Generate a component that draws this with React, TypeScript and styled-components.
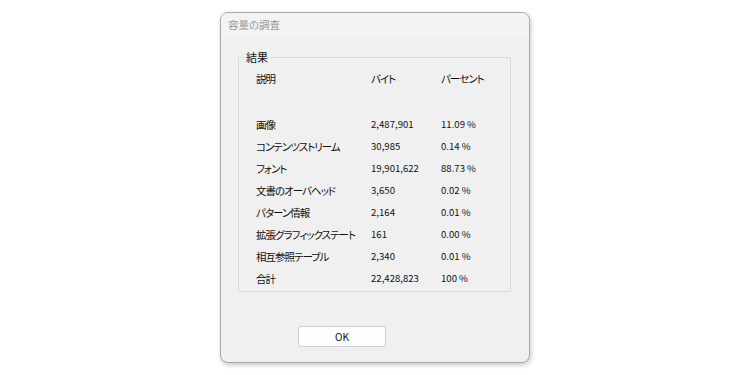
import styled, { createGlobalStyle } from 'styled-components'

const rows: [string, string, string][] = [
  ['画像', '2,487,901', '11.09 %'],
  ['コンテンツストリーム', '30,985', '0.14 %'],
  ['フォント', '19,901,622', '88.73 %'],
  ['文書のオーバヘッド', '3,650', '0.02 %'],
  ['パターン情報', '2,164', '0.01 %'],
  ['拡張グラフィックステート', '161', '0.00 %'],
  ['相互参照テーブル', '2,340', '0.01 %'],
  ['合計', '22,428,823', '100 %'],
]

export default function App() {
  return (
    <>
      <GlobalStyle />
      <Page>
        <Dialog>
          <TitleBar>容量の調査</TitleBar>
          <Body>
            <Group>
              <Legend>結果</Legend>
              <Table>
                <Cell>説明</Cell>
                <Cell>バイト</Cell>
                <Cell>パーセント</Cell>
                <Spacer />
                {rows.map(([label, bytes, pct]) => (
                  <Row key={label}>
                    <Cell>{label}</Cell>
                    <Num>{bytes}</Num>
                    <Num>{pct}</Num>
                  </Row>
                ))}
              </Table>
            </Group>
          </Body>
          <Footer>
            <Button type="button">OK</Button>
          </Footer>
        </Dialog>
      </Page>
    </>
  )
}

const GlobalStyle = createGlobalStyle`
  html, body {
    margin: 0;
    padding: 0;
    background: #ffffff;
  }
  body {
    font-family: 'Noto Sans CJK JP', 'Noto Sans', sans-serif;
    font-feature-settings: 'palt';
    color: #111111;
  }
`

const Page = styled.div`
  width: 750px;
  height: 375px;
  display: flex;
  align-items: center;
  justify-content: center;
`

const Dialog = styled.div`
  width: 310px;
  height: 351px;
  box-sizing: border-box;
  border: 1px solid #a9a9a9;
  border-radius: 8px;
  background: #f0f0f0;
  box-shadow: 1px 2px 5px rgba(0, 0, 0, 0.22);
  display: flex;
  flex-direction: column;
  overflow: hidden;
`

const TitleBar = styled.div`
  height: 25px;
  flex: none;
  background: #f3f3f3;
  color: #9a9a9a;
  font-size: 10.5px;
  line-height: 24px;
  padding-left: 7px;
`

const Body = styled.div`
  padding: 13px 18px 0 17px;
`

const Group = styled.fieldset`
  margin: 0;
  padding: 0 0 2px 0;
  border: 1px solid #dadada;
  min-width: 0;
`

const Legend = styled.legend`
  margin-left: 5px;
  padding: 0 2px;
  font-size: 11px;
  line-height: 13px;
  color: #111111;
`

const Table = styled.div`
  display: grid;
  grid-template-columns: 115px 70px 1fr;
  grid-template-rows: 22px 24px;
  grid-auto-rows: 22px;
  padding: 3px 0 0 17px;
  align-items: center;
`

const Row = styled.div`
  display: contents;
`

const Spacer = styled.div`
  grid-column: 1 / -1;
`

const Cell = styled.div`
  font-size: 10.5px;
  letter-spacing: -1px;
  white-space: nowrap;
`

const Num = styled(Cell)`
  font-size: 9.6px;
  letter-spacing: 0;
`

const Footer = styled.div`
  margin-top: auto;
  padding: 0 0 15px 77px;
`

const Button = styled.button`
  width: 88px;
  height: 21px;
  box-sizing: border-box;
  border: 1px solid #d0d0d0;
  border-radius: 3px;
  background: #fdfdfd;
  font-family: 'Noto Sans CJK JP', 'Noto Sans', sans-serif;
  font-size: 10px;
  color: #111111;
  padding: 0;
`
